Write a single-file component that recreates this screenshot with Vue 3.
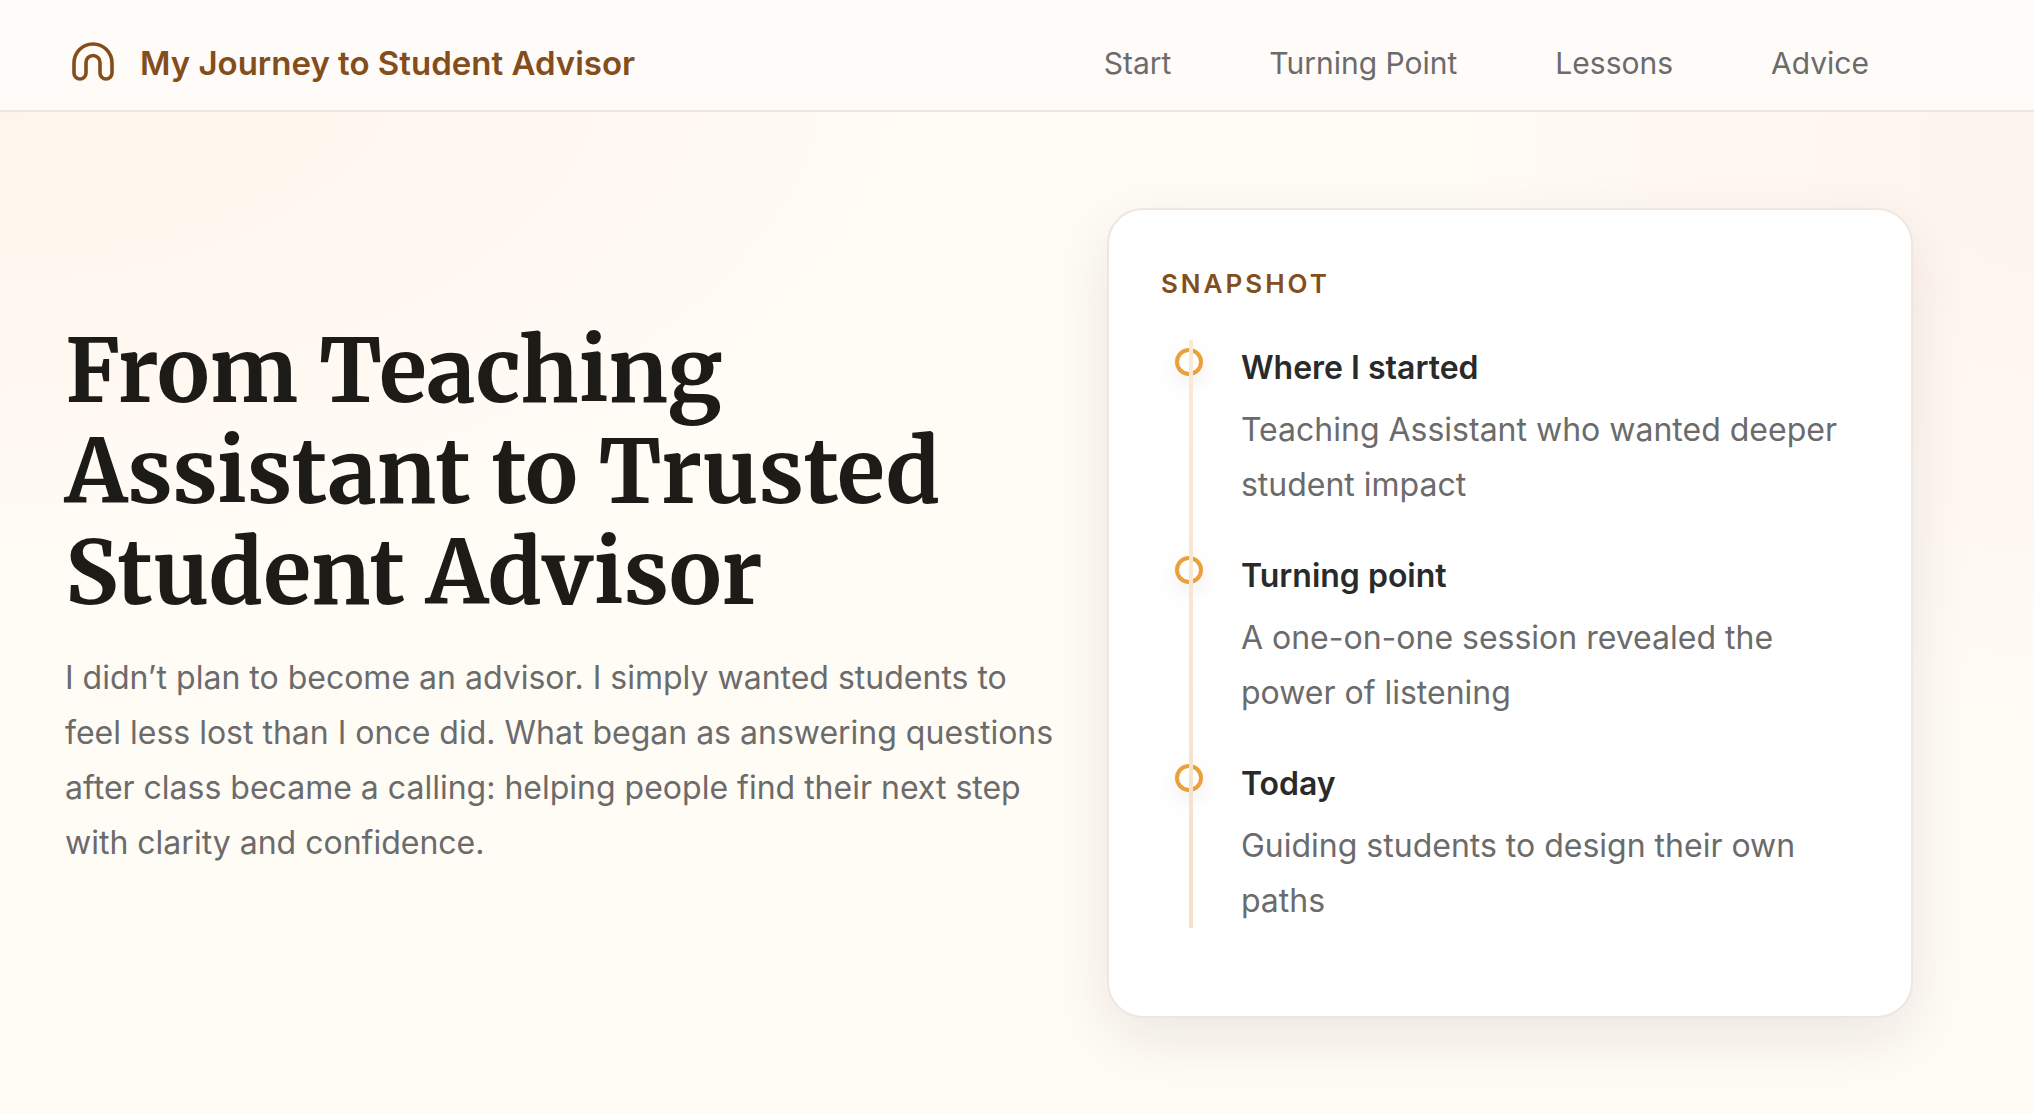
<script setup>
const links = [
  { label: 'Start', href: '#start' },
  { label: 'Turning Point', href: '#turning-point' },
  { label: 'Lessons', href: '#lessons' },
  { label: 'Advice', href: '#advice' },
]

const steps = [
  { title: 'Where I started', text: 'Teaching Assistant who wanted deeper student impact' },
  { title: 'Turning point', text: 'A one-on-one session revealed the power of listening' },
  { title: 'Today', text: 'Guiding students to design their own paths' },
]
</script>

<template>
  <div class="page">
    <header class="topbar">
      <a class="brand" href="#">
        <svg class="brand-icon" viewBox="0 0 42 44" aria-hidden="true">
          <path
            d="M2 21a19 19 0 0 1 38 0v10a6 6 0 0 1-12 0V20.500a7 7 0 0 0-14 0V31a6 6 0 0 1-12 0Z"
            fill="none"
            stroke="currentColor"
            stroke-width="3.600"
            stroke-linejoin="round"
          />
        </svg>
        <span>My Journey to Student Advisor</span>
      </a>
      <nav class="nav" aria-label="Main">
        <a v-for="link in links" :key="link.label" :href="link.href">{{ link.label }}</a>
      </nav>
    </header>

    <main class="hero">
      <section class="intro">
        <h1>From Teaching Assistant to Trusted Student Advisor</h1>
        <p>
          I didn’t plan to become an advisor. I simply wanted students to feel less lost than I once
          did. What began as answering questions after class became a calling: helping people find
          their next step with clarity and confidence.
        </p>
      </section>

      <aside class="card">
        <h2>Snapshot</h2>
        <ol class="timeline">
          <li v-for="step in steps" :key="step.title">
            <span class="dot"></span>
            <div>
              <h3>{{ step.title }}</h3>
              <p>{{ step.text }}</p>
            </div>
          </li>
        </ol>
      </aside>
    </main>
  </div>
</template>

<style>
body {
  margin: 0;
  background: #fffbf5;
}
</style>

<style scoped>
.page {
  min-height: 100vh;
  color: #2a2a2a;
  font-family: Inter, 'Liberation Sans', sans-serif;
  font-size: 32px;
  line-height: 55px;
  background:
    radial-gradient(900px 480px at 0% 6%, #fff5ec 10%, rgba(255, 245, 236, 0)),
    radial-gradient(560px 560px at 100% 14%, #fff5ef 20%, rgba(255, 245, 239, 0)),
    #fffbf5;
}

.topbar {
  display: flex;
  align-items: center;
  justify-content: space-between;
  padding: 36px 165px 19px 72px;
  background: #fffbf8;
  border-bottom: 2px solid #eee6df;
}

.brand {
  display: flex;
  align-items: center;
  gap: 26px;
  color: #834e1b;
  font-size: 33px;
  font-weight: 600;
  text-decoration: none;
}

.brand-icon {
  width: 42px;
  height: 44px;
}

.nav {
  display: flex;
  gap: 98px;
  font-size: 30px;
}

.nav a {
  color: #6b6b6b;
  text-decoration: none;
}

.hero {
  display: grid;
  grid-template-columns: minmax(0, 1.243fr) minmax(0, 1fr);
  gap: 40px;
  align-items: center;
  padding: 96px 121px 96px 65px;
}

h1 {
  margin: 0 0 27px;
  color: #1d1b17;
  font-family: Merriweather, 'Liberation Serif', serif;
  font-size: 88px;
  font-weight: 700;
  line-height: 101px;
}

p {
  margin: 0;
  color: #6b6b6b;
}

.intro p {
  margin-bottom: 36px;
}

.card {
  box-sizing: border-box;
  padding: 52px;
  background: #fff;
  border: 2px solid #eee6df;
  border-radius: 36px;
  box-shadow: 0 20px 60px rgba(30, 20, 20, 0.09);
}

h2 {
  margin: 0 0 34px;
  color: #834e1b;
  font-size: 26px;
  font-weight: 600;
  line-height: 44px;
  letter-spacing: 3px;
  text-transform: uppercase;
}

.timeline {
  position: relative;
  display: grid;
  gap: 36px;
  margin: 0 0 36px;
  padding: 0;
  list-style: none;
}

.timeline::after {
  content: '';
  position: absolute;
  top: 0;
  bottom: 0;
  left: 28px;
  width: 4px;
  background: linear-gradient(#fae9d8, #f3e2c9);
}

li {
  display: flex;
  gap: 38px;
  padding-left: 14px;
}

.dot {
  flex: none;
  box-sizing: border-box;
  width: 28px;
  height: 28px;
  margin-top: 8px;
  background: #fff;
  border: 4px solid #e9a23b;
  border-radius: 50%;
  box-shadow: 0 8px 24px rgba(0, 0, 0, 0.08);
}

h3 {
  margin: 0 0 7px;
  font-size: 32px;
  font-weight: 600;
  line-height: 55px;
}
</style>
